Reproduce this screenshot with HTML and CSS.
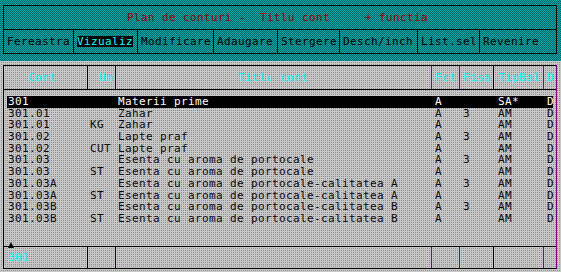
FILE: index.html
```html
<!DOCTYPE html>
<html>
<head>
<meta charset="utf-8">
<link rel="stylesheet" href="styles.css">
</head>
<body>
<div class="top">
  <div class="win">
    <div class="title">Plan de conturi -  Titlu cont     + functia</div>
    <div class="menu">
      <div class="mi first">Fereastra</div>
      <div class="mi"><span class="hl">Vizualiz</span></div>
      <div class="mi">Modificare</div>
      <div class="mi">Adaugare</div>
      <div class="mi">Stergere</div>
      <div class="mi">Desch/inch</div>
      <div class="mi">List.sel</div>
      <div class="mi">Revenire</div>
    </div>
  </div>
</div>
<div class="tbl">
  <div class="hdr">
    <div class="h1">Cont</div>
    <div class="h2">Um</div>
    <div class="h3">Titlu cont</div>
    <div class="h4">Fct</div>
    <div class="h5">Fisa</div>
    <div class="h6">TipBal</div>
    <div class="h7">D</div>
  </div>
  <div class="body">
    <div class="row sel"><span class="b1">301</span><span class="b2"></span><span class="b3">Materii prime</span><span class="b4">A</span><span class="b5"></span><span class="b6">SA*</span><span class="b7">D</span></div>
    <div class="row"><span class="b1">301.01</span><span class="b2"></span><span class="b3">Zahar</span><span class="b4">A</span><span class="b5">3</span><span class="b6">AM</span><span class="b7">D</span></div>
    <div class="row"><span class="b1">301.01</span><span class="b2">KG</span><span class="b3">Zahar</span><span class="b4">A</span><span class="b5"></span><span class="b6">AM</span><span class="b7">D</span></div>
    <div class="row"><span class="b1">301.02</span><span class="b2"></span><span class="b3">Lapte praf</span><span class="b4">A</span><span class="b5">3</span><span class="b6">AM</span><span class="b7">D</span></div>
    <div class="row"><span class="b1">301.02</span><span class="b2">CUT</span><span class="b3">Lapte praf</span><span class="b4">A</span><span class="b5"></span><span class="b6">AM</span><span class="b7">D</span></div>
    <div class="row"><span class="b1">301.03</span><span class="b2"></span><span class="b3">Esenta cu aroma de portocale</span><span class="b4">A</span><span class="b5">3</span><span class="b6">AM</span><span class="b7">D</span></div>
    <div class="row"><span class="b1">301.03</span><span class="b2">ST</span><span class="b3">Esenta cu aroma de portocale</span><span class="b4">A</span><span class="b5"></span><span class="b6">AM</span><span class="b7">D</span></div>
    <div class="row"><span class="b1">301.03A</span><span class="b2"></span><span class="b3">Esenta cu aroma de portocale-calitatea A</span><span class="b4">A</span><span class="b5">3</span><span class="b6">AM</span><span class="b7">D</span></div>
    <div class="row"><span class="b1">301.03A</span><span class="b2">ST</span><span class="b3">Esenta cu aroma de portocale-calitatea A</span><span class="b4">A</span><span class="b5"></span><span class="b6">AM</span><span class="b7">D</span></div>
    <div class="row"><span class="b1">301.03B</span><span class="b2"></span><span class="b3">Esenta cu aroma de portocale-calitatea B</span><span class="b4">A</span><span class="b5">3</span><span class="b6">AM</span><span class="b7">D</span></div>
    <div class="row"><span class="b1">301.03B</span><span class="b2">ST</span><span class="b3">Esenta cu aroma de portocale-calitatea B</span><span class="b4">A</span><span class="b5"></span><span class="b6">AM</span><span class="b7">D</span></div>
    <div class="tri"></div>
  </div>
  <div class="ftr">
    <div class="h1 f1">301</div>
    <div class="h2"></div>
    <div class="h3"></div>
    <div class="h4"></div>
    <div class="h5"></div>
    <div class="h6"></div>
    <div class="h7"></div>
  </div>
</div>
</body>
</html>
```
FILE: styles.css
```css
html, body {
  margin: 0;
  padding: 0;
}
body {
  width: 561px;
  height: 272px;
  overflow: hidden;
  font-family: "DejaVu Sans Mono", "Liberation Mono", monospace;
  font-size: 11px;
  letter-spacing: 0.38px;
  color: #000;
  background: repeating-conic-gradient(#8f8f8f 0 25%, #c8c8c8 0 100%) 0 0 / 2px 2px;
}
.top {
  height: 61px;
  padding: 5px 0 0 3px;
  box-sizing: border-box;
  background: repeating-conic-gradient(#006a6a 0 25%, #00a6a6 0 50%) 0 0 / 2px 2px;
}
.win {
  width: 554px;
  border: 1px solid #000;
  box-sizing: border-box;
}
.title {
  height: 23px;
  border-bottom: 1px solid #000;
  display: flex;
  align-items: center;
  padding-left: 123px;
  color: #a00000;
  white-space: pre;
}
.menu {
  height: 23px;
  display: grid;
  grid-template-columns: 69px 64px 76px 64px 62px 78px 62px 77px;
}
.mi {
  border-left: 1px solid #000;
  padding-left: 3px;
  display: flex;
  align-items: center;
  white-space: pre;
}
.mi.first {
  border-left: 0;
}
.hl {
  background: #000;
  color: #00ffff;
  line-height: 11px;
  height: 11px;
  display: inline-block;
}
.tbl {
  margin: 4px 0 0 3px;
  width: 554px;
  border: 1px solid #000;
  border-right-color: #800080;
  box-sizing: border-box;
}
.hdr, .ftr {
  display: grid;
  grid-template-columns: 83px 28px 316px 28px 34px 50px 13px;
}
.hdr {
  height: 23px;
  border-bottom: 1px solid #000;
  color: #00ffff;
}
.ftr {
  height: 21px;
  border-top: 1px solid #000;
  color: #00ffff;
}
.hdr > div, .ftr > div {
  display: flex;
  align-items: center;
  white-space: pre;
  box-sizing: border-box;
}
.h1 { padding-left: 24px; }
.h2 { border-left: 1px solid #000; padding-left: 11px; }
.h3 { border-left: 1px solid #200020; padding-left: 122px; }
.h4 { border-left: 1px solid #800080; padding-left: 3px; }
.h5 { border-left: 1px solid #800080; padding-left: 3px; }
.h6 { border-left: 1px solid #000; padding-left: 4px; }
.h7 { border-left: 1px solid #800080; padding-left: 3px; }
.ftr .f1 { padding-left: 4px; }
.body {
  height: 156px;
  box-sizing: border-box;
  padding: 6px 3px 0;
  position: relative;
}
.row {
  display: grid;
  grid-template-columns: 80px 28px 316px 28px 34px 50px 10px;
  height: 11.7px;
  line-height: 11.7px;
  white-space: pre;
  color: #0a0a0a;
}
.row.sel {
  background: #000;
  color: #fff;
}
.b1 { padding-left: 1px; }
.b2 { padding-left: 3px; }
.b3 { padding-left: 3px; }
.b4 { padding-left: 4px; }
.b5 { padding-left: 4px; }
.b6 { padding-left: 5px; }
.b7 { padding-left: 4px; overflow: visible; }
.tri {
  position: absolute;
  left: 4px;
  top: 152px;
  width: 0;
  height: 0;
  border-left: 3px solid transparent;
  border-right: 3px solid transparent;
  border-bottom: 6px solid #000;
  z-index: 2;
}
```
